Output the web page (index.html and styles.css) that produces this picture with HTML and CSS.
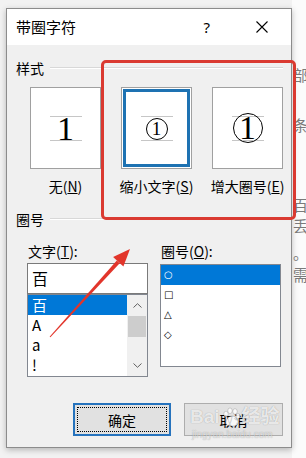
FILE: index.html
```html
<!DOCTYPE html>
<html>
<head>
<title>带圈字符</title>
<link rel="stylesheet" href="styles.css">
</head>
<body>
<div class="screen">
    <div class="dialog">
        <div class="titlebar">
            <span class="title">带圈字符</span>
            <span class="help">?</span>
            <svg class="close" width="12" height="12" viewBox="0 0 12 12"><path d="M0.5 0.5L11.5 11.5M11.5 0.5L0.5 11.5" stroke="#000" stroke-width="1.1" fill="none"/></svg>
        </div>
        <div class="content">
            <div class="group-head"><span>样式</span><i></i></div>
            <div class="styles">
                <div class="option">
                    <div class="box">
                        <div class="guide"><span class="digit">1</span></div>
                    </div>
                    <div class="label">无(<u>N</u>)</div>
                </div>
                <div class="option">
                    <div class="box selected">
                        <div class="guide"><span class="ring small">1</span></div>
                    </div>
                    <div class="label">缩小文字(<u>S</u>)</div>
                </div>
                <div class="option">
                    <div class="box">
                        <div class="guide"><span class="ring big">1</span></div>
                    </div>
                    <div class="label">增大圈号(<u>E</u>)</div>
                </div>
            </div>
            <div class="group-head second"><span>圈号</span><i></i></div>
            <div class="circles">
                <div class="col">
                    <div class="col-label">文字(<u>T</u>):</div>
                    <div class="text-input">百</div>
                    <div class="listbox">
                        <div class="items">
                            <div class="item active">百</div>
                            <div class="item">A</div>
                            <div class="item">a</div>
                            <div class="item">!</div>
                        </div>
                        <div class="scrollbar">
                            <div class="sb-btn"><svg width="9" height="5" viewBox="0 0 9 5"><path d="M0.5 4.5L4.5 0.7L8.5 4.5" stroke="#606060" fill="none"/></svg></div>
                            <div class="sb-thumb"></div>
                            <div class="sb-track"></div>
                            <div class="sb-btn"><svg width="9" height="5" viewBox="0 0 9 5"><path d="M0.5 0.5L4.5 4.3L8.5 0.5" stroke="#606060" fill="none"/></svg></div>
                        </div>
                    </div>
                </div>
                <div class="col">
                    <div class="col-label">圈号(<u>O</u>):</div>
                    <div class="shape-list">
                        <div class="item shape active">○</div>
                        <div class="item shape">□</div>
                        <div class="item shape">△</div>
                        <div class="item shape">◇</div>
                    </div>
                </div>
            </div>
            <div class="buttons">
                <button class="btn default"><span>确定</span></button>
                <button class="btn">取消</button>
            </div>
        </div>
    </div>
    <div class="doc">
        <div class="doc-line l1">部</div>
        <div class="doc-line l2">条</div>
        <div class="doc-line l3">百</div>
        <div class="doc-line l4">丢</div>
        <div class="doc-line l5">。</div>
        <div class="doc-line l6">需</div>
    </div>

    <div class="highlight"></div>
    <svg class="arrow" width="306" height="458" viewBox="0 0 306 458">
        <polygon points="49.6,336.7 50.4,337.3 119.7,263.2 116.8,260.5" fill="#e2352b"/>
        <polygon points="130,249 123.4,266.5 113.1,257.1" fill="#e2352b"/>
    </svg>
    <div class="watermark">
        <div class="wm-logo">
            <span>Bai</span>
            <svg class="paw" width="20" height="20" viewBox="0 0 20 20">
                <g fill="rgba(255,255,255,0.8)" stroke="rgba(0,0,0,0.25)" stroke-width="0.6">
                    <ellipse cx="5" cy="7" rx="2.2" ry="2.8"/>
                    <ellipse cx="9" cy="3.8" rx="2.2" ry="2.8"/>
                    <ellipse cx="14" cy="4.5" rx="2.2" ry="2.8"/>
                    <ellipse cx="17" cy="9" rx="2" ry="2.5"/>
                    <path d="M5 16c0-4 3-7 6-7s6 3 6 7c0 2-2 3-6 3s-6-1-6-3z"/>
                </g>
            </svg>
            <span>经验</span>
        </div>
        <span class="wm-url">jingyan.baidu.com</span>
    </div>
</div>
</body>
</html>
```

FILE: styles.css
```css
body {
    margin: 0;
    background-color: #f2f2f2;
    font-family: "Noto Sans CJK SC", "Noto Sans", sans-serif;
    color: #000;
}

.screen {
    position: relative;
    width: 306px;
    height: 458px;
    overflow: hidden;
    display: flex;
    align-items: flex-start;
}

.dialog {
    margin: 8px 0 0 6px;
    width: 291px;
    box-sizing: border-box;
    border: 1px solid #8c8c8c;
    background-color: #f0f0f0;
    box-shadow: 0 2px 6px rgba(0, 0, 0, 0.25);
    position: relative;
    z-index: 1;
}

.titlebar {
    height: 36px;
    background-color: #fff;
    display: flex;
    align-items: center;
    padding-left: 9px;
    font-size: 15px;
}

.title {
    flex: 1;
    line-height: 20px;
}

.help {
    font-family: "Noto Sans", sans-serif;
    font-size: 15px;
    margin-right: 46px;
}

.close {
    margin-right: 23px;
}

.content {
    padding: 13px 8px 11px 9px;
    font-size: 14px;
}

.group-head {
    display: flex;
    align-items: center;
    height: 20px;
    line-height: 20px;
}

.group-head i {
    flex: 1;
    margin-left: 6px;
    border-top: 1px solid #d8d8d8;
    border-bottom: 1px solid #fff;
}

.group-head.second {
    margin-top: 13px;
}

.styles {
    display: flex;
    gap: 20px;
    margin-top: 9px;
    padding-left: 14px;
}

.option {
    width: 71px;
    display: flex;
    flex-direction: column;
    align-items: center;
}

.box {
    width: 71px;
    height: 82px;
    box-sizing: border-box;
    border: 1px solid #a0a0a0;
    background-color: #fff;
    display: flex;
    align-items: center;
    justify-content: center;
}

.box.selected {
    box-shadow: inset 0 0 0 1px #fff, inset 0 0 0 4px #1e72b2;
}

.guide {
    width: 32px;
    height: 23px;
    border-top: 1px solid #c6c6c6;
    border-bottom: 1px solid #c6c6c6;
    display: flex;
    align-items: center;
    justify-content: center;
}

.digit {
    font-family: "Liberation Serif", serif;
    font-size: 34px;
    line-height: 24px;
    margin-top: 1px;
}

.ring {
    box-sizing: border-box;
    border: 1px solid #000;
    border-radius: 50%;
    display: flex;
    align-items: center;
    justify-content: center;
    flex: none;
    font-family: "Liberation Serif", serif;
}

.ring.small {
    width: 22px;
    height: 22px;
    font-size: 19px;
    line-height: 20px;
    margin-top: 1px;
}

.ring.big {
    width: 30px;
    height: 30px;
    font-size: 34px;
    line-height: 26px;
}

.label {
    margin-top: 7px;
    height: 20px;
    line-height: 20px;
    white-space: nowrap;
}

.circles {
    display: flex;
    gap: 12px;
    margin-top: 12px;
    padding-left: 11px;
}

.col {
    width: 121px;
}

.col-label {
    height: 20px;
    line-height: 20px;
    padding-left: 1px;
}

.text-input {
    margin-top: 2px;
    height: 31px;
    box-sizing: border-box;
    border: 1px solid #7a7a7a;
    background-color: #fff;
    padding-left: 4px;
    font-size: 16px;
    line-height: 29px;
}

.listbox {
    height: 83px;
    box-sizing: border-box;
    border: 1px solid #828790;
    background-color: #fff;
    display: flex;
}

.items {
    flex: 1;
}

.item {
    height: 20px;
    line-height: 20px;
    padding-left: 4px;
    font-size: 15px;
}

.item.active {
    background-color: #0078d7;
    color: #fff;
}

.scrollbar {
    width: 20px;
    background-color: #f0f0f0;
    display: flex;
    flex-direction: column;
}

.sb-btn {
    height: 21px;
    display: flex;
    align-items: center;
    justify-content: center;
}

.sb-thumb {
    height: 21px;
    margin: 0 1px;
    background-color: #cdcdcd;
}

.sb-track {
    flex: 1;
}

.shape-list {
    margin-top: 3px;
    height: 103px;
    box-sizing: border-box;
    border: 1px solid #828790;
    background-color: #fff;
}

.item.shape {
    font-family: "DejaVu Sans", sans-serif;
    font-size: 10px;
    padding-left: 3px;
}

.buttons {
    display: flex;
    justify-content: flex-end;
    gap: 13px;
    margin-top: 26px;
}

.btn {
    width: 99px;
    height: 33px;
    box-sizing: border-box;
    border: 1px solid #adadad;
    background-color: #e1e1e1;
    font-family: "Noto Sans CJK SC", sans-serif;
    font-size: 14px;
    padding: 0;
    color: #000;
}

.btn.default {
    width: 98px;
    border: 2px solid #2673bd;
    padding: 2px;
}

.btn.default span {
    display: flex;
    align-items: center;
    justify-content: center;
    height: 100%;
    box-sizing: border-box;
    border: 1px dotted #000;
}

.doc {
    flex: 1;
    background-color: #fbfbfb;
    align-self: stretch;
    padding-left: 1px;
    color: #7a7a7a;
    font-size: 15px;
}

.doc-line {
    height: 16px;
    line-height: 16px;
}

.l1 { margin-top: 67px; }
.l2 { margin-top: 34px; }
.l3 { margin-top: 64px; }
.l4 { margin-top: 5px; }
.l5 { margin-top: 11px; }
.l6 { margin-top: 6px; }

.highlight {
    position: absolute;
    left: 101px;
    top: 60px;
    width: 195px;
    height: 160px;
    box-sizing: border-box;
    border: 3px solid #da3a31;
    border-radius: 5px;
    z-index: 2;
}

.arrow {
    position: absolute;
    left: 0;
    top: 0;
    z-index: 2;
}

.watermark {
    position: absolute;
    left: 190px;
    top: 405px;
    z-index: 3;
    display: flex;
    flex-direction: column;
    color: rgba(255, 255, 255, 0.8);
    text-shadow: 0 0 1px rgba(0, 0, 0, 0.35);
}

.wm-logo {
    display: flex;
    align-items: center;
    gap: 1px;
    font-family: "Liberation Sans", "Noto Sans CJK SC", sans-serif;
    font-size: 19px;
    font-weight: bold;
    line-height: 24px;
}

.wm-url {
    font-family: "Liberation Sans", sans-serif;
    font-size: 10px;
    line-height: 12px;
    color: rgba(255, 255, 255, 0.6);
    padding-left: 2px;
}
```
